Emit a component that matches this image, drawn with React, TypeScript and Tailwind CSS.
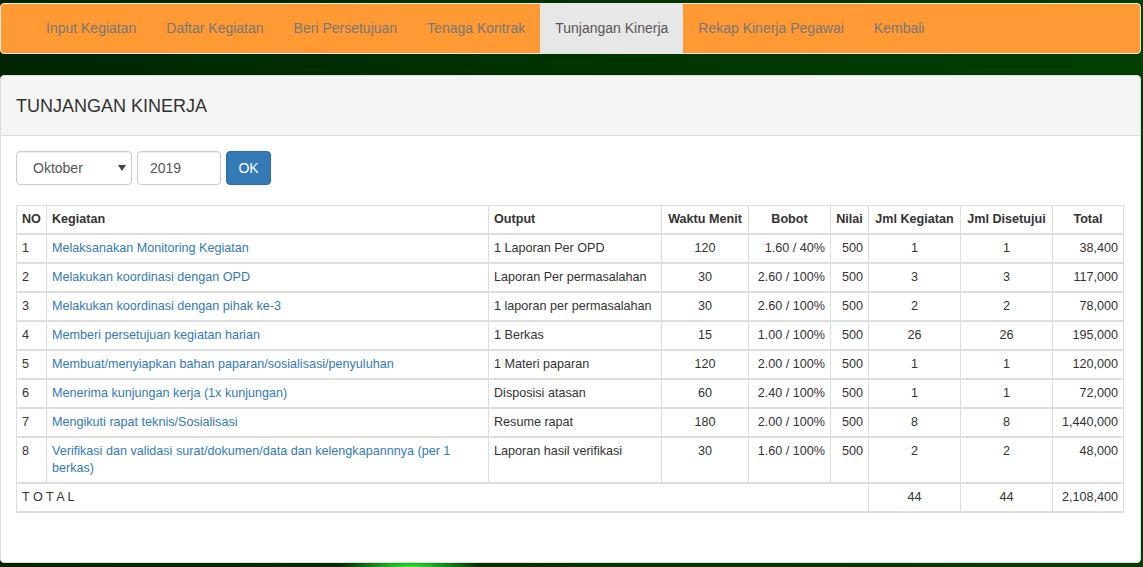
import React from "react";

const navItems = [
  "Input Kegiatan",
  "Daftar Kegiatan",
  "Beri Persetujuan",
  "Tenaga Kontrak",
  "Tunjangan Kinerja",
  "Rekap Kinerja Pegawai",
  "Kembali",
];

type Row = {
  no: number;
  kegiatan: string;
  output: string;
  waktu: string;
  bobot: string;
  nilai: string;
  jk: string;
  jd: string;
  total: string;
};

const rows: Row[] = [
  { no: 1, kegiatan: "Melaksanakan Monitoring Kegiatan", output: "1 Laporan Per OPD", waktu: "120", bobot: "1.60 / 40%", nilai: "500", jk: "1", jd: "1", total: "38,400" },
  { no: 2, kegiatan: "Melakukan koordinasi dengan OPD", output: "Laporan Per permasalahan", waktu: "30", bobot: "2.60 / 100%", nilai: "500", jk: "3", jd: "3", total: "117,000" },
  { no: 3, kegiatan: "Melakukan koordinasi dengan pihak ke-3", output: "1 laporan per permasalahan", waktu: "30", bobot: "2.60 / 100%", nilai: "500", jk: "2", jd: "2", total: "78,000" },
  { no: 4, kegiatan: "Memberi persetujuan kegiatan harian", output: "1 Berkas", waktu: "15", bobot: "1.00 / 100%", nilai: "500", jk: "26", jd: "26", total: "195,000" },
  { no: 5, kegiatan: "Membuat/menyiapkan bahan paparan/sosialisasi/penyuluhan", output: "1 Materi paparan", waktu: "120", bobot: "2.00 / 100%", nilai: "500", jk: "1", jd: "1", total: "120,000" },
  { no: 6, kegiatan: "Menerima kunjungan kerja (1x kunjungan)", output: "Disposisi atasan", waktu: "60", bobot: "2.40 / 100%", nilai: "500", jk: "1", jd: "1", total: "72,000" },
  { no: 7, kegiatan: "Mengikuti rapat teknis/Sosialisasi", output: "Resume rapat", waktu: "180", bobot: "2.00 / 100%", nilai: "500", jk: "8", jd: "8", total: "1,440,000" },
  { no: 8, kegiatan: "Verifikasi dan validasi surat/dokumen/data dan kelengkapannnya (per 1 berkas)", output: "Laporan hasil verifikasi", waktu: "30", bobot: "1.60 / 100%", nilai: "500", jk: "2", jd: "2", total: "48,000" },
];

const td = "border border-[#ddd] px-[5px] py-[5px] align-top";
const th = "border border-[#ddd] border-b-2 px-[5px] py-[5px] font-bold align-bottom";

export default function App() {
  return (
    <div
      className="min-h-[567px] w-full pt-[3px] pr-[2px] pb-[4px] bg-[radial-gradient(ellipse_70px_12px_at_410px_567px,#2ef02e,transparent),linear-gradient(90deg,#002500_0%,#003300_50%,#013f01_100%)]"
      style={{ fontFamily: '"Liberation Sans", Arial, Helvetica, sans-serif' }}
    >
      {/* Navbar */}
      <nav className="h-[51px] rounded-[4px] border border-[#e7e7e7] bg-[#ff9933] flex items-stretch pl-[30px]">
        {navItems.map((item) => {
          const active = item === "Tunjangan Kinerja";
          return (
            <div
              key={item}
              className={
                "flex items-center px-[15px] text-[14px] " +
                (active ? "bg-[#e7e7e7] text-[#555]" : "text-[#777]")
              }
            >
              {item}
            </div>
          );
        })}
      </nav>

      {/* Panel */}
      <div className="mt-[21px] h-[488px] rounded-[4px] border border-[#ddd] bg-white overflow-hidden">
        <div className="h-[60px] bg-[#f5f5f5] border-b border-[#ddd] flex items-center px-[15px]">
          <h3 className="text-[18px] text-[#333] leading-none">TUNJANGAN KINERJA</h3>
        </div>
        <div className="px-[15px] pt-[15px]">
          <div className="flex gap-[5px] h-[34px]">
            <div className="w-[116px] h-[34px] border border-[#ccc] rounded-[4px] flex items-center justify-between pl-[16px] pr-[4px] text-[14px] text-[#555] shadow-[inset_0_1px_1px_rgba(0,0,0,0.075)]">
              <span>Oktober</span>
              <svg width="8" height="6" viewBox="0 0 8 6" className="mr-[1px]">
                <path d="M0 0 L8 0 L4 6 Z" fill="#444" />
              </svg>
            </div>
            <div className="w-[84px] h-[34px] border border-[#ccc] rounded-[4px] flex items-center pl-[12px] text-[14px] text-[#555] shadow-[inset_0_1px_1px_rgba(0,0,0,0.075)]">
              2019
            </div>
            <button className="w-[45px] h-[34px] rounded-[4px] bg-[#337ab7] border border-[#2e6da4] text-white text-[14px]">
              OK
            </button>
          </div>

          <table className="mt-[20px] w-[1108px] table-fixed border-collapse text-[12.6px] leading-[17px] text-[#333]">
            <colgroup>
              <col className="w-[30px]" />
              <col className="w-[442px]" />
              <col className="w-[173px]" />
              <col className="w-[87px]" />
              <col className="w-[82px]" />
              <col className="w-[38px]" />
              <col className="w-[92px]" />
              <col className="w-[92px]" />
              <col />
            </colgroup>
            <thead>
              <tr>
                <th className={th + " text-left"}>NO</th>
                <th className={th + " text-left"}>Kegiatan</th>
                <th className={th + " text-left"}>Output</th>
                <th className={th + " text-center"}>Waktu Menit</th>
                <th className={th + " text-center"}>Bobot</th>
                <th className={th + " text-center"}>Nilai</th>
                <th className={th + " text-center"}>Jml Kegiatan</th>
                <th className={th + " text-center"}>Jml Disetujui</th>
                <th className={th + " text-center"}>Total</th>
              </tr>
            </thead>
            <tbody>
              {rows.map((r) => (
                <tr key={r.no} className="border-t-2 border-[#ddd]">
                  <td className={td}>{r.no}</td>
                  <td className={td + " text-[#337ab7]"}>{r.kegiatan}</td>
                  <td className={td}>{r.output}</td>
                  <td className={td + " text-center"}>{r.waktu}</td>
                  <td className={td + " text-right"}>{r.bobot}</td>
                  <td className={td + " text-right"}>{r.nilai}</td>
                  <td className={td + " text-center"}>{r.jk}</td>
                  <td className={td + " text-center"}>{r.jd}</td>
                  <td className={td + " text-right"}>{r.total}</td>
                </tr>
              ))}
              <tr className="border-t-2 border-b-2 border-[#ddd]">
                <td className={td} colSpan={6}>T O T A L</td>
                <td className={td + " text-center"}>44</td>
                <td className={td + " text-center"}>44</td>
                <td className={td + " text-right"}>2,108,400</td>
              </tr>
            </tbody>
          </table>
        </div>
      </div>
    </div>
  );
}
